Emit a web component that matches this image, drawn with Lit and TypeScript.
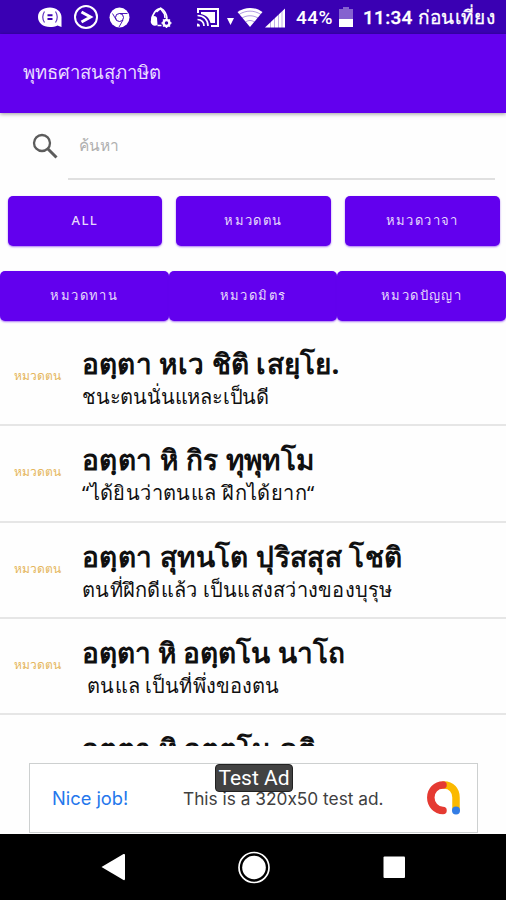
import { LitElement, html, css, svg } from "lit";
import { customElement } from "lit/decorators.js";
import { styleMap } from "lit/directives/style-map.js";

interface Verse {
  pali: string;
  thai: string;
  paliSpacing: number;
  thaiSpacing: number;
}

const VERSES: Verse[] = [
  { pali: "อตฺตา หเว ชิติ เสยฺโย.", thai: "ชนะตนนั่นแหละเป็นดี", paliSpacing: 0.22, thaiSpacing: -0.2 },
  { pali: "อตฺตา หิ กิร ทุพุทโม", thai: "“ได้ยินว่าตนแล ฝึกได้ยาก“", paliSpacing: 0.3, thaiSpacing: 0.4 },
  { pali: "อตฺตา สุทนโต ปุริสสุส โชติ", thai: "ตนที่ฝึกดีแล้ว เป็นแสงสว่างของบุรุษ", paliSpacing: 0.33, thaiSpacing: 0.25 },
  { pali: "อตฺตา หิ อตฺตโน นาโถ", thai: "\u00a0ตนแล เป็นที่พึ่งของตน", paliSpacing: -0.02, thaiSpacing: 0.12 },
  { pali: "อตฺตา หิ อตฺตโน คติ", thai: "", paliSpacing: 0.08, thaiSpacing: 0 },
];

@customElement("status-bar")
export class StatusBar extends LitElement {
  static styles = css`
    :host { display: flex; height: 34px; background: #3a00b3; color: #fff; }
    .icons { width: 288px; height: 34px; flex: none; }
    .battery { width: 14px; height: 22px; margin: 6px 0 0 5px; flex: none; }
    .text { font: 500 19px/36px Roboto, "Noto Sans", sans-serif; white-space: nowrap; }
    .percent { width: 38px; margin-left: 8px; letter-spacing: .5px; }
    .clock { margin-left: 10px; letter-spacing: .3px; -webkit-text-stroke: .3px #fff; }
  `;
  render() {
    return html`
      <svg class="icons" viewBox="0 0 288 34" fill="none" stroke="#fff">
        <path d="M50 7.500c6 0 11.500 4 11.500 9.500v10l-4-1.500c-2 1-5 1.500-7.500 1.500-7 0-12-4-12-10s5-9.500 12-9.500z" fill="#fff" stroke="none"/>
        <path d="M44.500 11.500q-3.500 5.500 0 11M55.500 11.500q3.500 5.500 0 11" stroke="#3a00b3" stroke-width="1.200" opacity=".8"/>
        <path d="M47.500 15.200h5M47.500 19h5" stroke="#3a00b3" stroke-width="1.900"/>
        <circle cx="86" cy="17" r="11" stroke-width="2"/>
        <path d="M81.500 12l9 5-9 5" stroke-width="3"/>
        <circle cx="119.500" cy="17.500" r="10" fill="#fff" stroke="none"/>
        <circle cx="119.500" cy="17.500" r="4" stroke="#3a00b3" stroke-width="1"/>
        <path d="M112.500 13.500l3.500 6M119.500 13.500h8M123 20l-4 7" stroke="#3a00b3" stroke-width=".9"/>
        <path d="M152 20c0-6 4-11 9-11.500 3.500 2 5.500 5.500 6 10" stroke-width="1.800"/>
        <path d="M151.500 17c2-2 5-1 5.500 1l.5 7c-3 1.500-6 .5-6.800-3z" fill="#fff" stroke="none"/>
        <path d="M156.500 12l4-3.500 4 5.500.5 4M157.500 25.500h4" stroke-width="1.600"/>
        <circle cx="166.500" cy="23" r="3" stroke-width="2.500"/>
        <path d="M166.500 18v2M166.500 26v2M161.500 23h2M169.500 23h2M163 19.500l1 1M170 26.500l-1-1M170 19.500l-1 1M163 26.500l1-1" stroke-width="1.400"/>
        <path d="M198 13v-4h20v17h-7" stroke-width="2"/>
        <path d="M201 12h14v11h-4.500c-1-5-4.500-8-9.500-9z" fill="#fff" stroke="none"/>
        <path d="M197.500 15.500c6.500 0 10.500 4.500 10.500 10.500M197.500 19.500c4 0 6.500 3 6.500 6.500" stroke-width="1.700"/>
        <path d="M197 23.500v3h3c0-2-1-3-3-3zM227 18h7l-3.500 7z" fill="#fff" stroke="none"/>
        <path d="M250 27l-12.500-15c8-5.500 17-5.500 25 0z" fill="#fff" stroke="none"/>
        <path d="M239 14.500c7-4.500 15-4.500 22 0M242 18c5-3 11-3 16 0M245.500 22c3-2 6-2 9 0" stroke="#3a00b3" stroke-width=".8" opacity=".5"/>
        <path d="M265 27.500l20-19v19z" fill="#fff" stroke="none"/>
        <path d="M270.500 20v8M274.500 17v11M278.500 13v15M282 10v18" stroke="#3a00b3" stroke-width=".7" opacity=".45"/>
      </svg>
      <span class="text percent">44%</span>
      <svg class="battery" viewBox="0 0 14 22">
        <path d="M4 1h6v2h4v10H0V3h4z" fill="#8562cf"/><path d="M0 13h14v8H0z" fill="#fff"/>
      </svg>
      <span class="text clock">11:34 ก่อนเที่ยง</span>
    `;
  }
}

@customElement("verse-row")
export class VerseRow extends LitElement {
  static properties = { verse: { attribute: false } };
  declare verse: Verse;
  static styles = css`
    :host { display: flex; height: 96.300px; box-sizing: border-box; border-bottom: 2px solid #e6e6e6; flex: none; }
    .tag { width: 82px; box-sizing: border-box; padding: 36px 0 0 14px; font: 12px/20px "Noto Sans", sans-serif; color: #e5b65c; white-space: nowrap; flex: none; }
    .body { display: flex; flex-direction: column; padding-top: 15px; white-space: nowrap; color: #101010; }
    .pali { font: bold 28px/36px "Noto Sans", sans-serif; height: 38px; }
    .thai { font: 20px/28px "Noto Sans", sans-serif; height: 28px; }
  `;
  render() {
    const v = this.verse;
    return html`
      ${v.thai ? html`<div class="tag">หมวดตน</div>` : html`<div class="tag"></div>`}
      <div class="body">
        <div class="pali" style=${styleMap({ letterSpacing: `${v.paliSpacing}px` })}>${v.pali}</div>
        <div class="thai" style=${styleMap({ letterSpacing: `${v.thaiSpacing}px` })}>${v.thai}</div>
      </div>
    `;
  }
}

@customElement("ad-banner")
export class AdBanner extends LitElement {
  static styles = css`
    :host { display: flex; position: relative; box-sizing: border-box; width: 449px; height: 70px; margin: 17px 0 1px 29px; border: 1.500px solid #cdd0d0; border-bottom-width: 1px; background: #fff; flex: none; font: 18.300px/69px Inter, sans-serif; white-space: nowrap; }
    .nice { width: 131px; padding-left: 22px; color: #2577ec; }
    .copy { width: 243px; color: #404040; font-size: 17.300px; font-feature-settings: "calt" 0; }
    .logo { width: 36px; height: 38px; margin-top: 15px; }
    .badge { position: absolute; left: 185px; top: 0; width: 78px; height: 28px; box-sizing: border-box; border-radius: 4px; background: #424242; border: 1px solid #222; color: #fff; font: 21px/27px Roboto, sans-serif; text-align: center; }
  `;
  render() {
    return html`
      <div class="nice">Nice job!</div>
      <div class="copy">This is a 320x50 test ad.</div>
      <svg class="logo" viewBox="0 0 36 38" fill="none" stroke-width="7.500" stroke-linecap="round">
        <path d="M18 6c7.500 0 12 5.500 12 12.500v11" stroke="#fbb900"/>
        <path d="M17 6C10 6 4.800 11.500 4.800 18.500S10 31.500 17 31.500" stroke="#e53a32"/>
        <circle cx="30" cy="31.500" r="4" fill="#337de5"/>
      </svg>
      <div class="badge">Test Ad</div>
    `;
  }
}

@customElement("app-root")
export class AppRoot extends LitElement {
  static styles = css`
    :host { display: flex; flex-direction: column; width: 506px; height: 900px; overflow: hidden; background: #fefefe; font-family: "Noto Sans", sans-serif; }
    .appbar { height: 79px; flex: none; box-sizing: border-box; padding: 20px 0 0 23px; background: #6200ee; color: #e9dcff; font-size: 18.500px; line-height: 36px; box-shadow: 0 1px 4px #0006; }
    .search { display: flex; height: 83px; flex: none; }
    .glass { width: 26px; height: 26px; margin: 20px 10px 0 32px; flex: none; }
    .field { width: 427px; height: 67px; box-sizing: border-box; border-bottom: 2px solid #e0e0e0; padding: 17px 0 0 11px; color: #b0b0b0; font-size: 15.500px; line-height: 30px; }
    .row { display: grid; grid-template-columns: repeat(3, 1fr); height: 50px; flex: none; }
    .spaced { gap: 14px; margin: 0 6.500px 25px 7.500px; }
    .chip { display: flex; align-items: center; justify-content: center; box-sizing: border-box; padding-bottom: 2px; border-radius: 5px; background: #6200ee; color: #e6d9fc; font-size: 13px; font-weight: 500; letter-spacing: 1.400px; box-shadow: 0 1px 2px #6200ee88; }
    .list { display: flex; flex-direction: column; height: 415.500px; margin-top: 9px; overflow: hidden; flex: none; }
    .nav { display: block; width: 506px; height: 67px; background: #000; flex: none; }
  `;
  render() {
    const chip = (t: string) => html`<div class="chip">${t}</div>`;
    return html`
      <status-bar></status-bar>
      <div class="appbar">พุทธศาสนสุภาษิต</div>
      <div class="search">
        <svg class="glass" viewBox="0 0 26 26" fill="none" stroke="#5c5c5c">
          <circle cx="10" cy="10" r="8" stroke-width="2.300"/><path d="M16 16l8.500 8.500" stroke-width="3"/>
        </svg>
        <div class="field">ค้นหา</div>
      </div>
      <div class="row spaced">${["ALL", "หมวดตน", "หมวดวาจา"].map(chip)}</div>
      <div class="row">${["หมวดทาน", "หมวดมิตร", "หมวดปัญญา"].map(chip)}</div>
      <div class="list">${VERSES.map((v) => html`<verse-row .verse=${v}></verse-row>`)}</div>
      <ad-banner></ad-banner>
      <svg class="nav" viewBox="0 0 506 67" fill="#fff">
        ${svg`<path d="M101.500 33L123.500 20q1.500-.5 1.500 1v24q0 1.500-1.500 1z"/>
        <circle cx="254" cy="33.500" r="11.800"/><circle cx="254" cy="33.500" r="15" fill="none" stroke="#fff" stroke-width="1.700"/>
        <rect x="383.500" y="22.500" width="21.500" height="21.500" rx="1"/>`}
      </svg>
    `;
  }
}
